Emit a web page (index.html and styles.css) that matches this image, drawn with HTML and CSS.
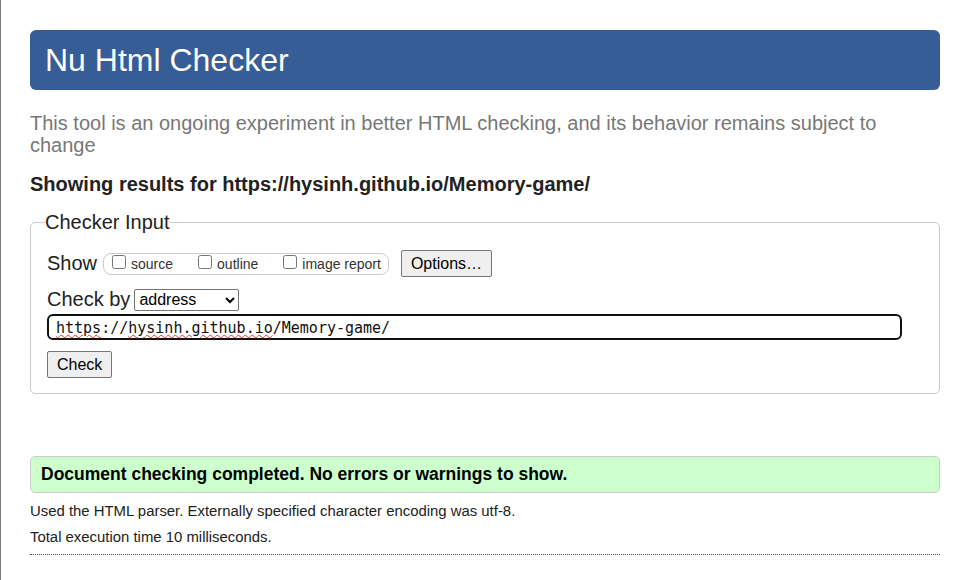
FILE: index.html
```html
<!DOCTYPE html>
<html lang="en">
<head>
<meta charset="utf-8">
<title>Nu Html Checker</title>
<link rel="stylesheet" href="styles.css">
</head>
<body>
<h1 class="title">Nu Html Checker</h1>
<p class="intro">This tool is an ongoing experiment in better HTML checking, and its behavior remains subject to change</p>
<p class="showing">Showing results for https://hysinh.github.io/Memory-game/</p>
<fieldset class="checker">
  <legend class="legend">Checker Input</legend>
  <div class="row show-row">
    <span class="row-label">Show</span>
    <span class="show-group">
      <label class="opt"><input type="checkbox" class="cb"><span>source</span></label>
      <label class="opt"><input type="checkbox" class="cb"><span>outline</span></label>
      <label class="opt"><input type="checkbox" class="cb"><span>image report</span></label>
    </span>
    <button class="btn options-btn" type="button">Options…</button>
  </div>
  <div class="row checkby-row">
    <span class="row-label">Check by</span>
    <select class="sel"><option>address</option></select>
  </div>
  <div class="url-field"><span class="misspelled">https</span>://<span class="misspelled">hysinh.github.io</span>/Memory-game/</div>
  <button class="btn check-btn" type="button">Check</button>
</fieldset>
<div class="success">Document checking completed. No errors or warnings to show.</div>
<p class="details">Used the HTML parser. Externally specified character encoding was utf-8.</p>
<p class="details">Total execution time 10 milliseconds.</p>
<hr class="dotted">
</body>
</html>
```
FILE: styles.css
```css
html { background: #fff; }
body {
  margin: 0;
  padding: 30px 26px 0 29px;
  border-left: 1px solid #7a7a7a;
  min-height: 580px;
  box-sizing: border-box;
  font-family: "Liberation Sans", Arial, sans-serif;
  color: #222;
}
.title {
  margin: 0;
  background: #365d95;
  color: #fff;
  font-size: 32px;
  font-weight: normal;
  line-height: 36px;
  padding: 12px 15px;
  border-radius: 6px;
}
.intro {
  margin: 22px 0 0;
  font-size: 20px;
  line-height: 22px;
  color: #777;
}
.showing {
  margin: 17px 0 0;
  font-size: 20px;
  font-weight: bold;
  color: #222;
  line-height: 23px;
}
.checker {
  margin: 15px 0 0;
  padding: 0 16px 15px 16px;
  border: 1px solid #ccc;
  border-radius: 5px;
}
.legend {
  font-size: 20px;
  line-height: 23px;
  padding: 0;
  margin-left: -2px;
  color: #222;
}
.row {
  display: flex;
  align-items: center;
}
.row-label {
  font-size: 20px;
  line-height: 23px;
  color: #222;
}
.show-row { margin-top: 16px; height: 27px; }
.show-group {
  display: inline-flex;
  align-items: center;
  border: 1px solid #ccc;
  border-radius: 8px;
  margin-left: 6px;
  padding: 0 7px 0 8px;
  height: 20px;
}
.opt {
  display: inline-flex;
  align-items: center;
  font-size: 14px;
  color: #333;
  margin-right: 25px;
}
.opt:last-child { margin-right: 0; }
.cb {
  margin: 0 5px 0 0;
  width: 14px;
  height: 14px;
  position: relative;
  top: -2px;
}
.btn {
  font-family: "Liberation Sans", Arial, sans-serif;
  font-size: 16px;
  color: #000;
  background: #efefef;
  border: 1px solid #767676;
  border-radius: 2px;
  padding: 2px 9px;
  height: 27px;
}
.options-btn { margin-left: 12px; }
.checkby-row { margin-top: 11px; height: 23px; }
.sel {
  margin-left: 4px;
  font-family: "Liberation Sans", Arial, sans-serif;
  font-size: 16px;
  color: #000;
  width: 105px;
  height: 22px;
  border: 1px solid #767676;
  border-radius: 2px;
  background: #fff;
}
.url-field {
  margin-top: 3px;
  width: 855px;
  box-sizing: border-box;
  height: 26px;
  border: 2px solid #101010;
  border-radius: 6px;
  padding: 1px 7px 0;
  font-family: "DejaVu Sans Mono", monospace;
  font-size: 15px;
  line-height: 22px;
  color: #111;
}
.misspelled {
  text-decoration: underline wavy #e33;
  text-decoration-thickness: 1px;
  text-underline-offset: 1px;
}
.check-btn { margin-top: 11px; }
.success {
  margin-top: 62px;
  background: #ccffcc;
  border: 1px solid #ccc;
  border-radius: 5px;
  padding: 6px 10px 7px;
  font-size: 17.5px;
  font-weight: bold;
  color: #000;
  line-height: 22px;
}
.details {
  margin: 9px 0 0;
  font-size: 14.9px;
  line-height: 18px;
  color: #222;
}
.details + .details { margin-top: 8px; }
.dotted {
  margin: 8px 0 0;
  border: 0;
  border-top: 1px dotted #555;
}
```
